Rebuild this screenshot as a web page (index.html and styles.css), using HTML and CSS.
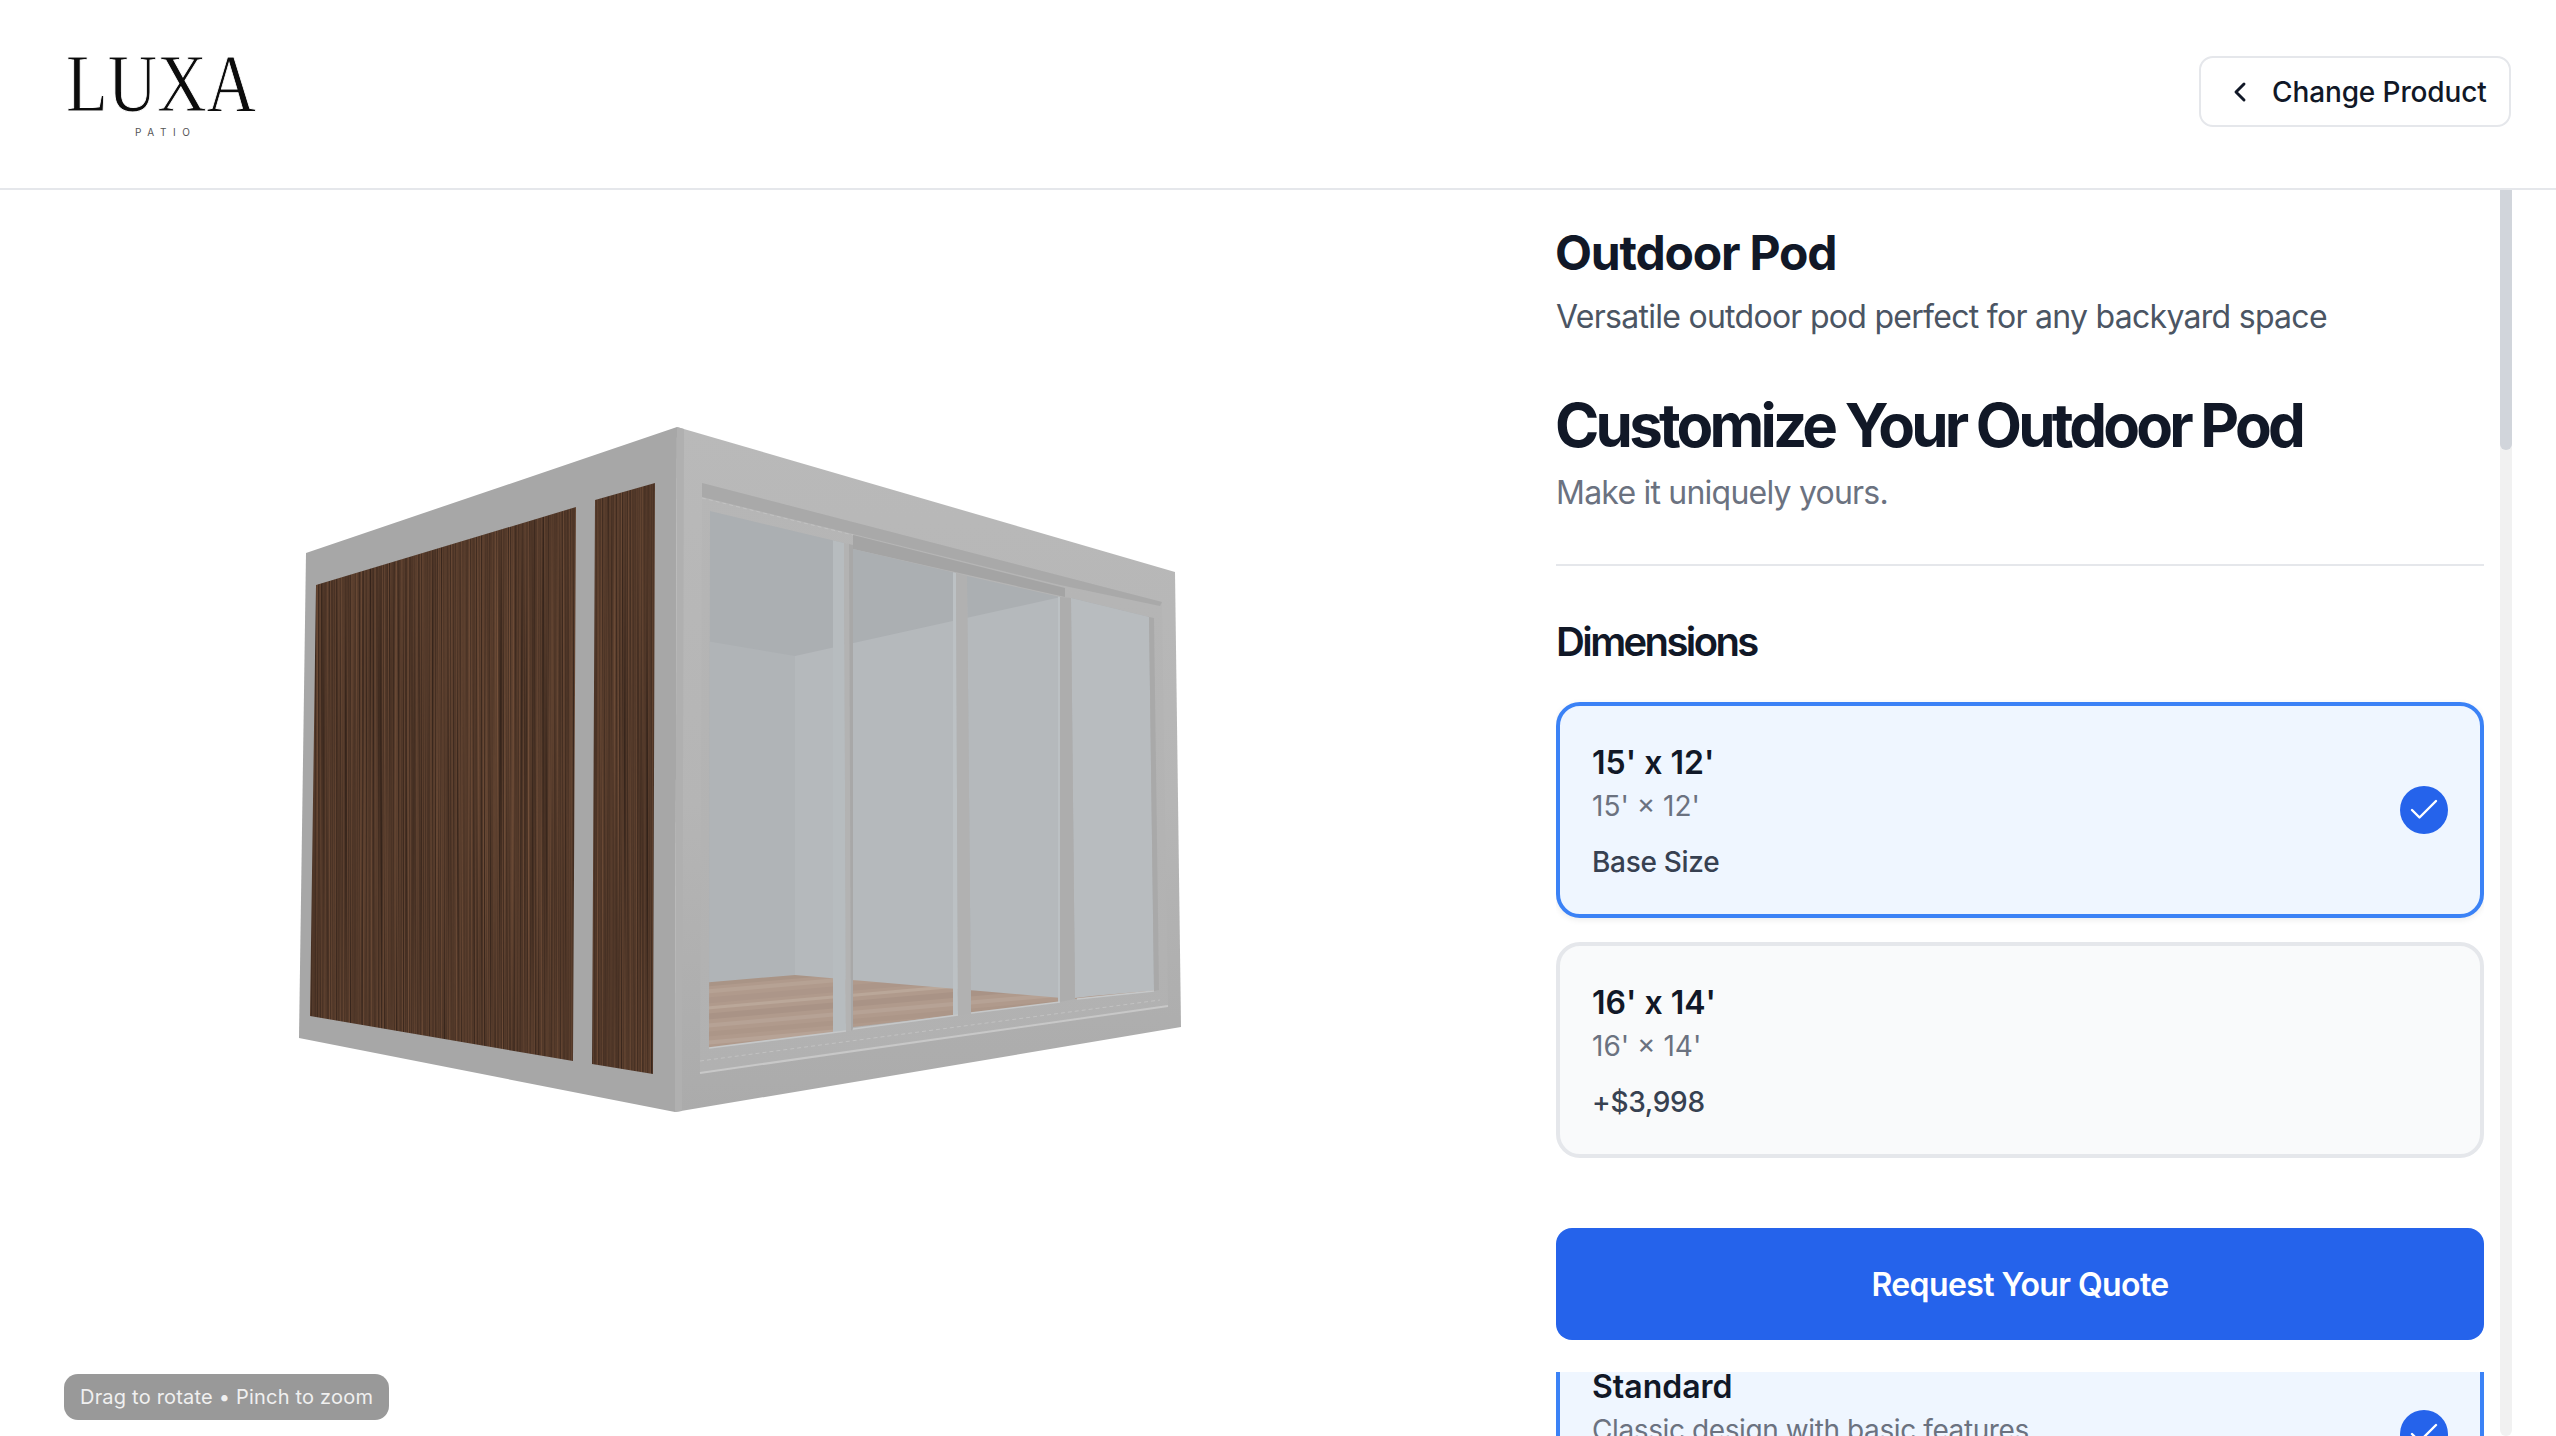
FILE: index.html
```html
<!DOCTYPE html>
<html lang="en">
<head>
<meta charset="utf-8">
<title>Luxa Patio - Outdoor Pod</title>
<link rel="stylesheet" href="styles.css">
</head>
<body>
<header class="topbar">
  <svg class="logo" viewBox="0 0 200 84" width="200" height="84" role="img" aria-label="Luxa Patio">
    <text class="logo-main" x="0" y="55" textLength="190" lengthAdjust="spacingAndGlyphs">LUXA</text>
    <text class="logo-sub" x="69" y="80">PATIO</text>
  </svg>
  <button class="change-btn" type="button">
    <svg class="chev" viewBox="0 0 24 24" width="32" height="32"><path d="m15 18-6-6 6-6"/></svg>
    <span>Change Product</span>
  </button>
</header>
<main class="layout">
  <section class="viewer">
    <svg class="model" viewBox="0 190 1534 1246" width="1534" height="1246" aria-hidden="true">
      <defs>
        <filter id="woodgrain" x="0" y="0" width="100%" height="100%" color-interpolation-filters="sRGB">
          <feTurbulence type="fractalNoise" baseFrequency="0.85 0.002" numOctaves="2" seed="7"/>
          <feColorMatrix type="matrix" values="0.38 0 0 0 0.13  0.27 0 0 0 0.085  0.19 0 0 0 0.065  0 0 0 0 1"/>
        </filter>
        <clipPath id="woodclip">
          <polygon points="316,585 576,507 573,1061 310,1016"/>
          <polygon points="595,500 655,483 653,1074 592,1064"/>
        </clipPath>
        <clipPath id="glassclip">
          <polygon points="710,511 844,543 846,1031 709,1048"/>
          <polygon points="853,549 956,573 958,1015 853,1027"/>
          <polygon points="967,576 1060,597 1060,1002 971,1013"/>
          <polygon points="1071,598 1149,617 1154,991 1075,999"/>
        </clipPath>
        <linearGradient id="rightface" x1="0" y1="0" x2="0" y2="1">
          <stop offset="0" stop-color="#b9b9b9"/>
          <stop offset="0.55" stop-color="#b5b5b5"/>
          <stop offset="1" stop-color="#ababab"/>
        </linearGradient>
        <linearGradient id="recess" x1="0" y1="0" x2="0" y2="1">
          <stop offset="0" stop-color="#b6b6b6"/>
          <stop offset="1" stop-color="#b1b1b1"/>
        </linearGradient>
        <pattern id="planks" width="400" height="76" patternUnits="userSpaceOnUse" patternTransform="translate(700 974) rotate(-5)">
          <rect width="400" height="76" fill="#b09a8c"/>
          <rect y="8" width="400" height="5" fill="#a99486"/>
          <rect y="16" width="400" height="4" fill="#b6a294"/>
          <rect y="24" width="400" height="6" fill="#ac9689"/>
          <rect y="33" width="400" height="3" fill="#baa799"/>
          <rect y="40" width="400" height="6" fill="#a99386"/>
          <rect y="50" width="400" height="4" fill="#b6a295"/>
          <rect y="58" width="400" height="5" fill="#ac9688"/>
          <rect y="67" width="400" height="4" fill="#b7a396"/>
        </pattern>
      </defs>

      <polygon points="306,553 677,427 675,1112 299,1038" fill="#a7a7a7"/>
      <g clip-path="url(#woodclip)">
        <rect x="300" y="470" width="370" height="610" filter="url(#woodgrain)"/>
      </g>

      <polygon points="677,427 1175,572 1181,1027 675,1112" fill="url(#rightface)"/>
      <polygon points="677,427 684,429 682,1111 675,1112" fill="#b0b0b0"/>
      <polygon points="702,483 1162,602 1168,1006 700,1073" fill="url(#recess)"/>
      <polygon points="702,483 1162,602 1160,606 1060,585 853,534 702,497" fill="#a9a9a9"/>
      <polygon points="853,535 1065,588 1065,597 853,549" fill="#a4a4a4"/>

      <g clip-path="url(#glassclip)">
        <rect x="700" y="500" width="470" height="560" fill="#abafb2"/>
        <polygon points="700,640 795,656 795,985 700,985" fill="#b0b4b7"/>
        <polygon points="795,656 1160,575 1160,1010 795,1010" fill="#b5b9bc"/>
        <polygon points="1071,598 1149,617 1154,991 1075,999" fill="#b8bcbf"/>
        <polygon points="700,983 795,975 1062,998 1075,998 1092,996 1160,990 1160,1060 700,1060" fill="url(#planks)"/>
        <rect x="833" y="540" width="13" height="500" fill="#b7bcbf"/>
        <rect x="953" y="570" width="5" height="450" fill="#bcc1c4"/>
        <rect x="1058" y="590" width="3" height="415" fill="#bcc1c4"/>
      </g>

      <polygon points="844,543 849,544 851,1031 846,1031" fill="#b3b3b3"/>
      <polygon points="849,544 853,545 853,1028 851,1031" fill="#a8a8a8"/>
      <polygon points="956,573 967,576 971,1013 958,1015" fill="#b1b1b1"/>
      <polygon points="1060,597 1071,598 1075,999 1060,1002" fill="#adadad"/>
      <polygon points="1149,617 1154,618 1159,990 1154,991" fill="#a9a9a9"/>

      <polyline class="sill" points="709,1048 846,1031"/>
      <polyline class="sill" points="853,1029 958,1015"/>
      <polyline class="sill" points="971,1013 1060,1002"/>
      <polyline class="sill" points="1077,999 1154,991"/>
      <polyline class="sill-low" points="700,1073 1168,1006"/>
      <polyline class="sill-dash" points="700,1061 1160,1000"/>
      <polyline class="sill-dash" points="702,498 853,535"/>
    </svg>
    <div class="hint">Drag to rotate • Pinch to zoom</div>
  </section>

  <aside class="panel">
    <div class="panel-body">
      <h1 class="product-name">Outdoor Pod</h1>
      <p class="product-desc">Versatile outdoor pod perfect for any backyard space</p>
      <h2 class="customize">Customize Your Outdoor Pod</h2>
      <p class="customize-sub">Make it uniquely yours.</p>
      <hr class="divider">
      <h3 class="group-title">Dimensions</h3>
      <div class="options">
        <div class="option option-selected">
          <div class="option-text">
            <div class="option-title">15' x 12'</div>
            <div class="option-sub">15' × 12'</div>
            <div class="option-price">Base Size</div>
          </div>
          <span class="tick"><svg viewBox="0 0 24 24" width="36" height="36"><path d="M20 6 9 17l-5-5"/></svg></span>
        </div>
        <div class="option">
          <div class="option-text">
            <div class="option-title">16' x 14'</div>
            <div class="option-sub">16' × 14'</div>
            <div class="option-price">+$3,998</div>
          </div>
        </div>
      </div>
      <button class="quote-btn" type="button">Request Your Quote</button>
      <div class="quote-gap"></div>
      <div class="option-clipped">
        <div class="option-text">
          <div class="option-title">Standard</div>
          <div class="option-sub option-sub-tight">Classic design with basic features</div>
        </div>
        <span class="tick"><svg viewBox="0 0 24 24" width="36" height="36"><path d="M20 6 9 17l-5-5"/></svg></span>
      </div>
    </div>
    <div class="scroll-track"><div class="scroll-thumb"></div></div>
  </aside>
</main>
</body>
</html>
```
FILE: styles.css
```css
* { box-sizing: border-box; }
html, body { margin: 0; height: 100%; }
body {
  width: 2556px;
  height: 1436px;
  overflow: hidden;
  background: #fff;
  color: #111827;
  font-family: Inter, "Noto Sans", sans-serif;
}
.topbar {
  height: 190px;
  border-bottom: 2px solid #e5e7eb;
  padding: 56px 45px 0 66px;
  display: flex;
  justify-content: space-between;
  align-items: flex-start;
}
.logo { display: block; overflow: visible; }
.logo-main {
  font-family: "Liberation Serif", serif;
  font-size: 82px;
  fill: #0c0c0c;
  stroke: #fff;
  stroke-width: 0.9px;
}
.logo-sub {
  font-family: Inter, sans-serif;
  font-size: 10px;
  letter-spacing: 6.6px;
  fill: #555;
}
.change-btn {
  width: 312px;
  height: 71px;
  display: flex;
  align-items: center;
  gap: 16px;
  padding: 0 23px;
  background: #fff;
  border: 2px solid #e5e7eb;
  border-radius: 14px;
  color: #111827;
  font-family: inherit;
  font-size: 28px;
  font-weight: 500;
  letter-spacing: -0.12px;
  white-space: nowrap;
}
.chev { flex: none; }
.chev path { fill: none; stroke: #111827; stroke-width: 2.2; stroke-linecap: round; stroke-linejoin: round; }
.layout {
  height: 1246px;
  display: flex;
  padding-right: 44px;
}
.viewer {
  position: relative;
  width: 1534px;
  flex: none;
  overflow: hidden;
}
.model { display: block; }
.sill { fill: none; stroke: #c6c8c9; stroke-width: 1.6; }
.sill-low { fill: none; stroke: #c8c8c8; stroke-width: 2; }
.sill-dash { fill: none; stroke: #c2c2c2; stroke-width: 1; stroke-dasharray: 4 3; }
.hint {
  position: absolute;
  left: 64px;
  bottom: 16px;
  height: 46px;
  padding: 0 16px;
  display: flex;
  align-items: center;
  background: #999;
  border-radius: 14px;
  color: #f0f0f0;
  font-size: 20px;
  letter-spacing: 0.2px;
  white-space: nowrap;
}
.panel {
  flex: 1;
  min-width: 0;
  display: flex;
  gap: 16px;
  padding-left: 22px;
}
.panel-body {
  flex: 1;
  min-width: 0;
  height: 1246px;
  overflow: hidden;
  padding-top: 33px;
}
.product-name {
  margin: 0 0 0 -1px;
  font-size: 48px;
  line-height: 60px;
  font-weight: 700;
  letter-spacing: -0.025em;
}
.product-desc {
  margin: 10px 0 0;
  font-size: 32px;
  line-height: 48px;
  letter-spacing: -0.72px;
  color: #4b5563;
}
.customize {
  margin: 48px 0 0 -1px;
  font-size: 60px;
  line-height: 72px;
  font-weight: 700;
  letter-spacing: -3.8px;
}
.customize-sub {
  margin: 8px 0 -1px;
  font-size: 32px;
  line-height: 48px;
  letter-spacing: -0.78px;
  color: #6b7280;
}
.divider {
  margin: 48px 0 0;
  height: 2px;
  border: 0;
  background: #e5e7eb;
}
.group-title {
  margin: 48px 0 0;
  font-size: 40px;
  line-height: 56px;
  font-weight: 600;
  letter-spacing: -2.6px;
}
.options {
  margin-top: 32px;
  display: flex;
  flex-direction: column;
  gap: 24px;
}
.option {
  height: 216px;
  padding: 32px;
  display: flex;
  justify-content: space-between;
  align-items: center;
  background: #f9fafb;
  border: 4px solid #e5e7eb;
  border-radius: 24px;
}
.option-selected {
  background: #eff6ff;
  border-color: #3b82f6;
  box-shadow: 0 2px 6px rgba(0, 0, 0, 0.08);
}
.option-title {
  font-size: 32px;
  line-height: 50px;
  margin-bottom: -2px;
  font-weight: 600;
  color: #111827;
}
.option-sub {
  font-size: 28px;
  line-height: 40px;
  color: #6b7280;
}
.option-sub-tight { letter-spacing: -0.4px; }
.option-price {
  margin-top: 16px;
  font-size: 28px;
  line-height: 40px;
  font-weight: 500;
  letter-spacing: -0.3px;
  color: #374151;
}
.tick {
  width: 48px;
  height: 48px;
  flex: none;
  display: flex;
  align-items: center;
  justify-content: center;
  background: #2563eb;
  border-radius: 50%;
}
.tick path { fill: none; stroke: #fff; stroke-width: 1.6; stroke-linecap: round; stroke-linejoin: round; }
.quote-btn {
  display: block;
  width: 100%;
  height: 112px;
  margin-top: 70px;
  border: 0;
  border-radius: 16px;
  background: #2563eb;
  color: #fff;
  font-family: inherit;
  font-size: 32px;
  font-weight: 600;
  letter-spacing: -0.6px;
}
.quote-gap { height: 32px; background: #fff; }
.option-clipped {
  height: 124px;
  padding: 0 32px;
  display: flex;
  justify-content: space-between;
  align-items: center;
  background: #eff6ff;
  border-left: 4px solid #3b82f6;
  border-right: 4px solid #3b82f6;
}
.option-clipped .option-text { align-self: flex-start; margin-top: -10px; }
.scroll-track {
  width: 12px;
  height: 1246px;
  flex: none;
  background: #f1f1f1;
  border-radius: 0 0 6px 6px;
}
.scroll-thumb {
  height: 260px;
  background: #d1d5db;
  border-radius: 0 0 6px 6px;
}
```
